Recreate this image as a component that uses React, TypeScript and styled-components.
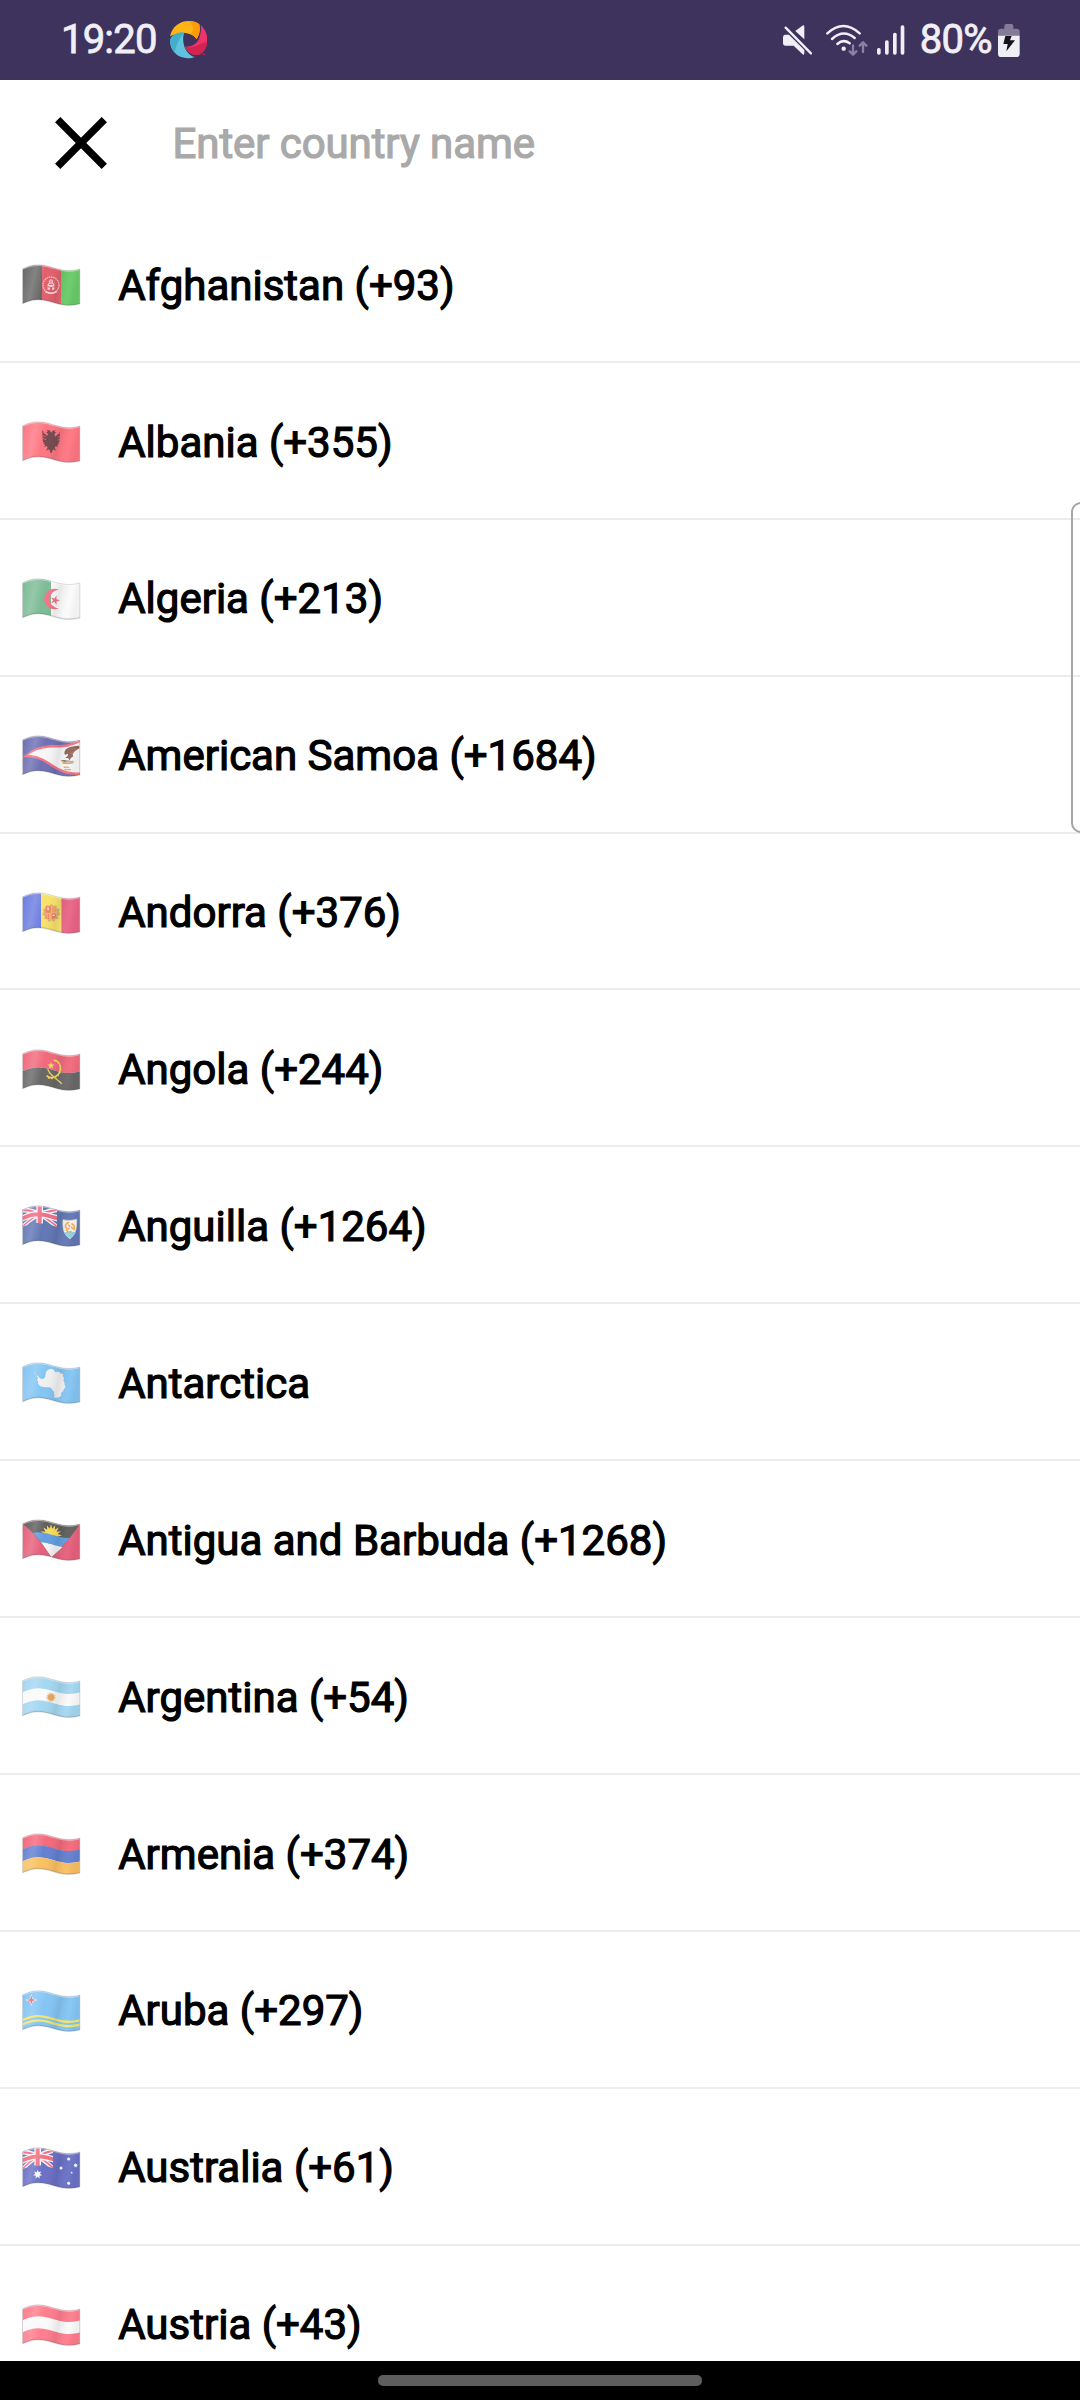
import React from "react";
import styled, { createGlobalStyle } from "styled-components";

const GlobalStyle = createGlobalStyle`
  * { box-sizing: border-box; }
  body { margin: 0; background: #fff; font-family: Roboto, "Liberation Sans", sans-serif; }
`;

const Screen = styled.div`
  position: relative;
  display: flex;
  flex-direction: column;
  width: 1080px;
  height: 2400px;
  overflow: hidden;
  background: #fff;
`;

const StatusBar = styled.header`
  flex: none;
  display: flex;
  align-items: center;
  justify-content: space-between;
  height: 80px;
  padding: 0 60px 0 61px;
  background: #3e335d;
  color: #f1eff6;
`;

const StatusGroup = styled.div<{ $gap: number }>`
  display: flex;
  align-items: center;
  gap: ${(p) => p.$gap}px;
`;

const StatusText = styled.span<{ $width: number }>`
  width: ${(p) => p.$width}px;
  font-size: 40px;
  font-weight: 400;
  letter-spacing: -0.8px;
  line-height: 80px;
  white-space: nowrap;
  -webkit-text-stroke: 0.8px currentColor;
`;

const Glyph = styled.svg<{ $w: number; $h: number }>`
  flex: none;
  display: block;
  width: ${(p) => p.$w}px;
  height: ${(p) => p.$h}px;
`;

const WifiSlot = styled.div`
  margin-left: 14px;
`;

const PercentSlot = styled.div`
  margin-left: 15px;
`;

const SearchBar = styled.div`
  flex: none;
  display: flex;
  align-items: center;
  gap: 65.5px;
  height: 126px;
  padding: 0 55px;
`;

const CloseButton = styled.button`
  display: flex;
  padding: 0;
  border: 0;
  background: none;
`;

const SearchInput = styled.input`
  flex: 1;
  min-width: 0;
  padding: 0;
  border: 0;
  outline: 0;
  background: none;
  color: #000;
  font: 400 42px Roboto, "Liberation Sans", sans-serif;
  letter-spacing: -0.08px;
  &::placeholder {
    color: #a9a9a9;
    opacity: 1;
    -webkit-text-stroke: 1.2px #a9a9a9;
  }
`;

const List = styled.ul`
  flex: 1;
  min-height: 0;
  margin: 0;
  padding: 0;
  overflow: hidden;
  list-style: none;
`;

const Row = styled.li`
  display: flex;
  align-items: center;
  gap: 37.2px;
  height: 156.9px;
  padding: 4.4px 22px 0;
  border-bottom: 2px solid #ececec;
`;

const Name = styled.span`
  color: #000;
  font-size: 42px;
  font-weight: 400;
  line-height: 50px;
  white-space: nowrap;
  -webkit-text-stroke: 1.2px #000;
`;

const NavBar = styled.footer`
  flex: none;
  display: flex;
  justify-content: center;
  height: 39px;
  padding-top: 14px;
  background: #000;
`;

const HomePill = styled.div`
  width: 324px;
  height: 11px;
  border-radius: 5px;
  background: #5e5e5e;
`;

const EdgeHandle = styled.div`
  position: absolute;
  top: 502px;
  right: -12px;
  width: 21px;
  height: 331px;
  border: 2px solid #a6a6a6;
  border-radius: 10px;
`;

/* ---- Waving flag geometry: flat (x, y) points on a 173 x 106 cloth ---- */
type Pt = [number, number];

const wave = (x: number) =>
  9.5 - 8.5 * Math.cos((Math.PI * (x - 46)) / 94) + (x < 46 ? 4 * ((46 - x) / 46) ** 2 : 0);

const cloth = (pts: Pt[]) => {
  const out: string[] = [];
  pts.forEach(([x, y], i) => {
    const [nx, ny] = pts[(i + 1) % pts.length];
    const steps = Math.max(1, Math.ceil(Math.abs(nx - x) / 8));
    for (let s = 0; s < steps; s++) {
      const px = x + ((nx - x) * s) / steps;
      const py = y + ((ny - y) * s) / steps;
      out.push(`${px.toFixed(1)} ${(py + wave(px)).toFixed(1)}`);
    }
  });
  return `M${out.join("L")}Z`;
};

const rect = (x0: number, y0: number, x1: number, y1: number) =>
  cloth([[x0, y0], [x1, y0], [x1, y1], [x0, y1]]);

const star = (cx: number, cy: number, r: number, inner: number, n: number, rot = -90) =>
  Array.from({ length: n * 2 }, (_, i) => {
    const a = ((rot + (i * 180) / n) * Math.PI) / 180;
    const d = i % 2 ? inner : r;
    return `${(cx + d * Math.cos(a)).toFixed(1)},${(cy + d * Math.sin(a)).toFixed(1)}`;
  }).join(" ");

const Patch = ({ a, fill }: { a: [number, number, number, number]; fill: string }) => (
  <path d={rect(...a)} fill={fill} />
);
const Shape = ({ p, fill }: { p: Pt[]; fill: string }) => <path d={cloth(p)} fill={fill} />;

const UnionJack = ({ w, h, red }: { w: number; h: number; red: string }) => {
  const cx = w / 2;
  const cy = h / 2;
  return (
    <>
      <Shape p={[[0, 0], [14, 0], [w, h - 8], [w, h], [w - 14, h], [0, 8]]} fill="#f6f3fa" />
      <Shape p={[[w, 0], [w - 14, 0], [0, h - 8], [0, h], [14, h], [w, 8]]} fill="#f6f3fa" />
      <Shape p={[[0, 0], [5, 0], [w, h - 4], [w, h], [w - 4, h], [0, 4]]} fill={red} />
      <Shape p={[[w, 0], [w - 5, 0], [0, h - 4], [0, h], [4, h], [w, 4]]} fill={red} />
      <Patch a={[cx - 10, 0, cx + 10, h]} fill="#f8f5fa" />
      <Patch a={[0, cy - 10, w, cy + 10]} fill="#f8f5fa" />
      <Patch a={[cx - 6, 0, cx + 6, h]} fill={red} />
      <Patch a={[0, cy - 6, w, cy + 6]} fill={red} />
    </>
  );
};

const flags: Record<string, React.ReactNode> = {
  af: (
    <>
      <Patch a={[0, 0, 59, 106]} fill="#686868" />
      <Patch a={[59, 0, 116, 106]} fill="#e2606c" />
      <Patch a={[116, 0, 173, 106]} fill="#68cb68" />
      <circle cx="86" cy="62" r="24" fill="none" stroke="#f4c3c6" strokeWidth="4" strokeDasharray="5 2" />
      <path d="M76 76V60l4-5v-6l6-5 6 5v6l4 5v16h-7v-8h-6v8z" fill="#f6d3d5" />
      <path d="M80 60h12M77 68h6m7 0h6M86 48v10" stroke="#e2606c" strokeWidth="3" />
      <path d="M69 82q17 10 35 0" fill="none" stroke="#f8e0e0" strokeWidth="4" />
    </>
  ),
  al: (
    <>
      <Patch a={[0, 0, 173, 106]} fill="#ff7682" />
      <path
        d="M87 34l-5-7-9-1 4 5-6 1 6 6-3 6-15-18 3 36 5 3-5 3 7 2-4 7 8-3 3 5-5 9 9-4 3 6 3 7 4-7 2-6 9 4-4-9 3-5 8 3-4-7 7-2-5-3 5-3 2-30-14 14-3-7 6-6-6-1 4-5-9 1z"
        fill="#754a50"
      />
      <path d="M61 32l8 6m-8 4l9 5m-9 4l10 4m43-21l-8 6m8 4l-9 5m9 4l-10 4" stroke="#ff7682" strokeWidth="2" />
    </>
  ),
  dz: (
    <>
      <Patch a={[0, 0, 86, 106]} fill="#7dbc96" />
      <Patch a={[86, 0, 173, 106]} fill="#fbfbfb" />
      <path d="M110 34A31 31 0 1 0 110 90A27 27 0 1 1 110 34Z" fill="#f77487" />
      <polygon points={star(98, 66, 15, 5.6, 5, 0)} fill="#f77487" />
    </>
  ),
  as: (
    <>
      <Patch a={[0, 0, 173, 106]} fill="#6e70b3" />
      <Shape p={[[173, -1], [173, 106], [100, 90], [0, 53], [90, 20]]} fill="#f27486" />
      <Shape p={[[173, 7], [173, 98], [105, 83], [18, 53], [92, 27]]} fill="#f8f7f8" />
      <path d="M171 31c-14 0-28 2-38 9-8 6-8 16-4 18l8-3-1 7-7 5 9 2 4 7 3-8 8-5-3-7 9-10 12-7z" fill="#8d6659" />
      <path d="M146 42l14-3-7 9-9 6 8-1-7 9" fill="none" stroke="#bd6b61" strokeWidth="3" />
      <path d="M116 75l10 5 28-2m-34 5l16 2 18-3M124 94l7 4m0-4l10 4m-15 5h20" stroke="#d8ad74" strokeWidth="4" />
    </>
  ),
  ad: (
    <>
      <Patch a={[0, 0, 56, 106]} fill="#6c7ee0" />
      <Patch a={[56, 0, 117, 106]} fill="#f8e26a" />
      <Patch a={[117, 0, 173, 106]} fill="#ea6486" />
      <polygon points={star(87, 62, 28, 22, 11)} fill="#d3b477" />
      <path d="M70 41h32v30q-2 10-16 13-15-4-16-14z" fill="#f5b86c" />
      <path d="M70 42h15v19H70zM88 63h13v11q-2 5-13 7z" fill="#ef7c6a" />
      <path d="M77 43v17m5-17v17M92 42v18m6-18v18M73 65v14m6-14v16" stroke="#e98a5f" strokeWidth="3" />
      <path d="M75 45h4v9h-4zM91 67h6v4h-6z" fill="#fff0cf" />
    </>
  ),
  ao: (
    <>
      <Patch a={[0, 0, 173, 53]} fill="#f06a7c" />
      <Patch a={[0, 53, 173, 106]} fill="#686868" />
      <path d="M94 32c25 4 26 38 7 49-10 6-22 5-28-2" fill="none" stroke="#f5d95f" strokeWidth="5" />
      <path d="M98 34c23 8 20 39 2 50-9 5-20 4-27-1" fill="none" stroke="#f5d95f" strokeWidth="5" strokeDasharray="5 5" />
      <path d="M76 60q7 18 40 40M81 70l38 34" fill="none" stroke="#e8cd63" strokeWidth="4" />
      <polygon points={star(86, 49, 11, 4.5, 5)} fill="#f8de62" />
    </>
  ),
  ai: (
    <>
      <Patch a={[0, 0, 173, 106]} fill="#6278b5" />
      <UnionJack w={104} h={52} red="#ee6f84" />
      <path d="M122 43q20 6 41-1c1 28-3 46-20 58-18-11-23-29-21-57z" fill="#f6f4ef" stroke="#e8e3c1" strokeWidth="2" />
      <path d="M125 80h35q-4 12-17 19-13-7-18-19z" fill="#8ed2ef" />
      <path d="M133 71c-7-9-3-19 8-20m6 4c10 3 12 13 6 19m-5 4c-8 4-14 1-17-5M138 58l6 6m3 0l4 7m-9-3l-7 5" fill="none" stroke="#f6aa5c" strokeWidth="5" />
    </>
  ),
  aq: (
    <>
      <Patch a={[0, 0, 173, 106]} fill="#84c5f3" />
      <path
        d="M35 26l4 9 5 3 0 5 4 3-4 7 4 5-1 6 6 7 6 2 11 2 13 0 5 4 4 6 4 4-1 6 2 6 -4 3 8 2 10-1 6-6-1-7 6-5 3-7 5-6-3-6-1-9-3-5 2-6-4-7 2-5-8-3-6-5-11 2-3-7-8-4-9 3-5 3-3 8-1 10-5 6-7 1-5-3-5-6-4-2z"
        fill="#f1f1f1"
      />
    </>
  ),
  ag: (
    <>
      <Patch a={[0, 0, 173, 106]} fill="#e6607c" />
      <Shape p={[[0, 0], [173, 0], [87, 106]]} fill="#5f5f5f" />
      <polygon points={star(86, 48, 33, 20, 16)} fill="#fbdc5b" />
      <Shape p={[[33, 38], [142, 38], [117, 68], [56, 68]]} fill="#639fe2" />
      <Shape p={[[56, 67], [120, 67], [87, 106]]} fill="#f5f5f5" />
    </>
  ),
  ar: (
    <>
      <Patch a={[0, 0, 173, 106]} fill="#a4d7f2" />
      <Patch a={[0, 35, 173, 71]} fill="#fafafa" />
      <polygon points={star(86, 63, 16, 11, 16)} fill="#ecc995" />
      <circle cx="86" cy="63" r="9" fill="#e7a35e" />
    </>
  ),
  am: (
    <>
      <Patch a={[0, 0, 173, 36]} fill="#f46a7c" />
      <Patch a={[0, 35, 173, 71]} fill="#6380d1" />
      <Patch a={[0, 71, 173, 106]} fill="#fac062" />
    </>
  ),
  aw: (
    <>
      <Patch a={[0, 0, 173, 106]} fill="#84c5f5" />
      <Patch a={[0, 73, 173, 80]} fill="#f5e66b" />
      <Patch a={[0, 86, 173, 93]} fill="#f5e66b" />
      <polygon points={star(27, 29, 18, 6, 4)} fill="#fff" />
      <polygon points={star(27, 29, 14, 4.5, 4)} fill="#f0667b" />
    </>
  ),
  au: (
    <>
      <Patch a={[0, 0, 173, 106]} fill="#6a70c6" />
      <UnionJack w={92} h={53} red="#f2707f" />
      <g fill="#fafaff">
        <polygon points={star(46, 81, 14, 7, 7)} />
        <polygon points={star(139, 35, 6, 3.5, 7)} />
        <polygon points={star(116, 62, 6, 3.5, 7)} />
        <polygon points={star(160, 54, 7, 4, 7)} />
        <polygon points={star(148, 76, 4, 2, 5)} />
        <polygon points={star(139, 108, 6, 3.5, 7)} />
      </g>
    </>
  ),
  at: (
    <>
      <Patch a={[0, 0, 173, 106]} fill="#ff7d8e" />
      <Patch a={[0, 35, 173, 71]} fill="#fafafa" />
    </>
  ),
};

const outline = rect(0.5, 0.5, 172.5, 105.5);

const Flag = ({ code }: { code: string }) => (
  <Glyph $w={59} $h={43} viewBox="-1 -1 177 129" aria-hidden="true">
    <defs>
      <clipPath id={`cloth-${code}`}>
        <path d={outline} />
      </clipPath>
      <linearGradient id={`shade-${code}`} x1="0" x2="1" y1="0" y2="0.15">
        <stop offset="0" stopColor="#000" stopOpacity="0.05" />
        <stop offset="0.08" stopColor="#fff" stopOpacity="0.05" />
        <stop offset="0.24" stopColor="#fff" stopOpacity="0.18" />
        <stop offset="0.42" stopColor="#fff" stopOpacity="0" />
        <stop offset="0.68" stopColor="#000" stopOpacity="0.08" />
        <stop offset="0.88" stopColor="#fff" stopOpacity="0.04" />
        <stop offset="1" stopColor="#000" stopOpacity="0.04" />
      </linearGradient>
    </defs>
    <g clipPath={`url(#cloth-${code})`}>
      {flags[code]}
      <path d={outline} fill={`url(#shade-${code})`} />
      <path d={rect(-2, -2, 176, 4)} fill="#fff" fillOpacity="0.45" />
      <path d={rect(-2, 102, 176, 108)} fill="#555" fillOpacity="0.18" />
    </g>
    <path d={outline} fill="none" stroke="#8c8c8c" strokeOpacity="0.35" strokeWidth="2.5" />
  </Glyph>
);

const countries = [
  { code: "af", name: "Afghanistan", dial: "93" },
  { code: "al", name: "Albania", dial: "355" },
  { code: "dz", name: "Algeria", dial: "213" },
  { code: "as", name: "American Samoa", dial: "1684" },
  { code: "ad", name: "Andorra", dial: "376" },
  { code: "ao", name: "Angola", dial: "244" },
  { code: "ai", name: "Anguilla", dial: "1264" },
  { code: "aq", name: "Antarctica", dial: "" },
  { code: "ag", name: "Antigua and Barbuda", dial: "1268" },
  { code: "ar", name: "Argentina", dial: "54" },
  { code: "am", name: "Armenia", dial: "374" },
  { code: "aw", name: "Aruba", dial: "297" },
  { code: "au", name: "Australia", dial: "61" },
  { code: "at", name: "Austria", dial: "43" },
];

const AppLogo = () => (
  <Glyph $w={37.3} $h={37.3} viewBox="0 0 112 112">
    <path d="M0 46C6 18 28 0 56 0C72 0 82 4 88 10C91 26 89 42 80 54C66 36 40 28 0 46Z" fill="#fdb515" />
    <path d="M56 0C72 0 82 4 88 10C91 26 89 42 80 54C74 46 68 42 62 39C72 28 72 10 56 0Z" fill="#ff9a0a" />
    <path d="M92 12C104 22 112 38 112 56C112 80 100 98 84 102C66 103 51 92 45 77C64 78 82 69 88 50C93 36 94 24 92 12Z" fill="#f0326b" />
    <path d="M112 62C110 82 100 98 84 102C66 103 51 92 45 77C70 86 90 66 112 62Z" fill="#d32350" />
    <path d="M0 58C6 40 24 33 43 35C36 50 40 78 52 93C58 101 66 107 75 108C60 114 40 112 28 106C10 96 0 80 0 58Z" fill="#5fc3dd" />
    <path d="M0 58C6 40 24 33 43 35C34 46 20 62 14 94C4 84 0 70 0 58Z" fill="#43adca" />
    <path d="M98 100h8" stroke="#d32350" strokeWidth="3" />
  </Glyph>
);

const MuteIcon = () => (
  <Glyph $w={29.3} $h={30} viewBox="72 73 88 90">
    <path d="M78 102H90L136 148V158Q136 165 130 160L104 135H80Q72 135 72 127V110Q72 102 78 102Z" fill="#f1eff6" />
    <path d="M109 91L130 75Q136 71 136 78V116Z" fill="#f1eff6" />
    <path d="M84 76L162 154" stroke="#3e335d" strokeWidth="6" />
    <path d="M80 81L156 158" stroke="#f1eff6" strokeWidth="7" strokeLinecap="round" />
  </Glyph>
);

const WifiIcon = () => (
  <Glyph $w={41.7} $h={32} viewBox="202 70 125 96" fill="none" strokeLinecap="round">
    <g stroke="#f1eff6" strokeWidth="7.5">
      <path d="M206 98Q254 54 303 98" />
      <path d="M220 115Q254 84 288 112" />
      <path d="M236 130Q254 114 273 128" />
    </g>
    <circle cx="255" cy="144" r="6.5" fill="#f1eff6" />
    <g stroke="#8a82a0" strokeWidth="7" strokeLinejoin="round">
      <path d="M283 134V161M273 152L283 162L293 152" />
      <path d="M313 154V126M303 135L313 125L323 135" />
    </g>
  </Glyph>
);

const SignalIcon = () => (
  <Glyph $w={27.7} $h={30} viewBox="355 73 83 90">
    {[[355, 142], [379, 119], [403, 96], [426, 74]].map(([x, y]) => (
      <rect key={x} x={x} y={y} width="11" height={162 - y} rx="5" fill="#f1eff6" />
    ))}
  </Glyph>
);

const BatteryIcon = () => (
  <Glyph $w={21.7} $h={33} viewBox="716 69 65 99">
    <path d="M735 75Q735 69 741 69H756Q762 69 762 75V83H772Q781 83 781 92V105H716V92Q716 83 725 83H735Z" fill="#857b99" />
    <path d="M716 104H781V158Q781 168 771 168H726Q716 168 716 158Z" fill="#f1eff6" />
    <path d="M738 105H757L752 118H767L741 151L745 129H732Z" fill="#15131c" />
  </Glyph>
);

export default function App() {
  return (
    <Screen>
      <GlobalStyle />
      <StatusBar>
        <StatusGroup $gap={10}>
          <StatusText $width={98.5}>19:20</StatusText>
          <AppLogo />
        </StatusGroup>
        <StatusGroup $gap={0}>
          <MuteIcon />
          <StatusGroup $gap={9.3}>
            <WifiSlot>
              <WifiIcon />
            </WifiSlot>
            <SignalIcon />
          </StatusGroup>
          <PercentSlot>
            <StatusText as="div" $width={78.5}>80%</StatusText>
          </PercentSlot>
          <BatteryIcon />
        </StatusGroup>
      </StatusBar>
      <SearchBar>
        <CloseButton aria-label="Close">
          <Glyph $w={52} $h={52} viewBox="0 0 52 52">
            <path d="M2.7 2.7L49.3 49.3M49.3 2.7L2.7 49.3" stroke="#000" strokeWidth="7.5" />
          </Glyph>
        </CloseButton>
        <SearchInput placeholder="Enter country name" />
      </SearchBar>
      <List>
        {countries.map((c) => (
          <Row key={c.code}>
            <Flag code={c.code} />
            <Name>{c.dial ? `${c.name} (+${c.dial})` : c.name}</Name>
          </Row>
        ))}
      </List>
      <NavBar>
        <HomePill />
      </NavBar>
      <EdgeHandle />
    </Screen>
  );
}
